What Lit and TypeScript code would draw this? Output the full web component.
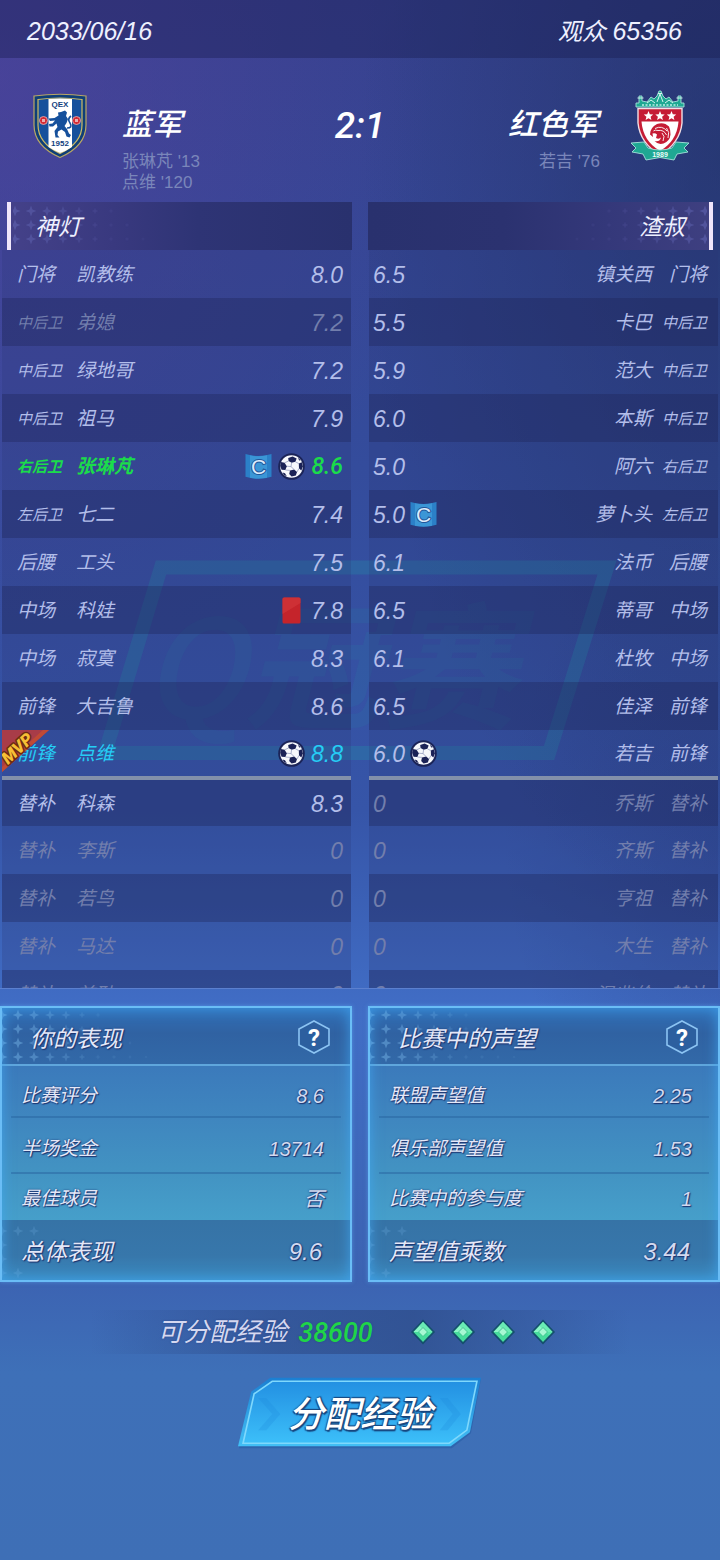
import { LitElement, html, svg, css, nothing } from "lit";
import { customElement, property } from "lit/decorators.js";
import { classMap } from "lit/directives/class-map.js";

type Mark = "captain" | "goal" | "red";
type Tone = "normal" | "self" | "best" | "off";

interface Player {
  pos: string;
  name: string;
  rating: string;
  marks?: Mark[];
  tone?: Tone;
  mvp?: boolean;
}

const home: Player[] = [
  { pos: "门将", name: "凯教练", rating: "8.0" },
  { pos: "中后卫", name: "弟媳", rating: "7.2", tone: "off" },
  { pos: "中后卫", name: "绿地哥", rating: "7.2" },
  { pos: "中后卫", name: "祖马", rating: "7.9" },
  { pos: "右后卫", name: "张琳芃", rating: "8.6", tone: "self", marks: ["captain", "goal"] },
  { pos: "左后卫", name: "七二", rating: "7.4" },
  { pos: "后腰", name: "工头", rating: "7.5" },
  { pos: "中场", name: "科娃", rating: "7.8", marks: ["red"] },
  { pos: "中场", name: "寂寞", rating: "8.3" },
  { pos: "前锋", name: "大吉鲁", rating: "8.6" },
  { pos: "前锋", name: "点维", rating: "8.8", tone: "best", marks: ["goal"], mvp: true },
  { pos: "替补", name: "科森", rating: "8.3" },
  { pos: "替补", name: "李斯", rating: "0", tone: "off" },
  { pos: "替补", name: "若鸟", rating: "0", tone: "off" },
  { pos: "替补", name: "马达", rating: "0", tone: "off" },
  { pos: "替补", name: "首耿", rating: "0", tone: "off" },
];

const away: Player[] = [
  { pos: "门将", name: "镇关西", rating: "6.5" },
  { pos: "中后卫", name: "卡巴", rating: "5.5" },
  { pos: "中后卫", name: "范大", rating: "5.9" },
  { pos: "中后卫", name: "本斯", rating: "6.0" },
  { pos: "右后卫", name: "阿六", rating: "5.0" },
  { pos: "左后卫", name: "萝卜头", rating: "5.0", marks: ["captain"] },
  { pos: "后腰", name: "法币", rating: "6.1" },
  { pos: "中场", name: "蒂哥", rating: "6.5" },
  { pos: "中场", name: "杜牧", rating: "6.1" },
  { pos: "前锋", name: "佳泽", rating: "6.5" },
  { pos: "前锋", name: "若吉", rating: "6.0", marks: ["goal"] },
  { pos: "替补", name: "乔斯", rating: "0", tone: "off" },
  { pos: "替补", name: "齐斯", rating: "0", tone: "off" },
  { pos: "替补", name: "亨祖", rating: "0", tone: "off" },
  { pos: "替补", name: "木生", rating: "0", tone: "off" },
  { pos: "替补", name: "温兆伦", rating: "0", tone: "off" },
];

const fontStack = css`"Liberation Sans", "Noto Sans CJK SC", sans-serif`;

const ballIcon = html`<svg class="mark" viewBox="0 0 27 27" role="img" aria-label="进球">
  <circle cx="13.5" cy="13.5" r="13.3" fill="#1b2458" />
  <circle cx="13.5" cy="13.5" r="11.3" fill="#f7f8fc" />
  <g fill="#1b2256">
    <path d="M10.2 5 14.6 3.400 18.6 5.400 17.4 8.8 13.6 9.8 10.6 8z" />
    <path d="M2.8 9 6.6 9.8 8.8 13.2 7.4 17 3.6 16.8 2.2 13z" />
    <path d="M12 17.400 16.200 16.600 19 19 17.8 22.4 13.6 23.6 11.2 21z" />
    <path d="M20.800 10.6 23.8 9.200 24.8 13.2 23.4 17.400 21 15.4z" />
    <path d="M4.6 19.4 7 20.2 8.8 23.2 6 22z" />
    <path d="M19.8 4.4 22.8 7.2 21.2 7.4z" />
  </g>
  <g stroke="#8a92b8" stroke-width=".7" fill="none">
    <path d="M13.600 9.800 13 13.600 16.200 16.600M13 13.600 8.800 13.200M17.400 8.800 20.800 10.600M7.400 17 12 17.400M19 19 21 15.400M10.600 8 6.600 9.800" />
  </g>
</svg>`;

const captainIcon = html`<svg class="mark" viewBox="0 0 27 27" role="img" aria-label="队长">
  <path d="M.5 1Q13.500 5 26.500 1V23.800Q13.500 27.600 .5 23.800Z" fill="#2b80c8" />
  <path d="M5 2.200Q13.500 4.400 22 2.200V24.800Q13.500 26.400 5 24.800Z" fill="#3b96d6" />
  <text x="13.500" y="21" text-anchor="middle" class="cap">C</text>
</svg>`;

const redIcon = html`<svg class="mark" viewBox="0 0 27 27" role="img" aria-label="红牌">
  <rect x="4.500" y=".5" width="18" height="26" rx="1.500" fill="#c5242b" />
  <path d="M4.500 17 22.500 6V2a1.500 1.500 0 0 0-1.500-1.500H6A1.500 1.500 0 0 0 4.500 2z" fill="#d2363a" opacity=".7" />
</svg>`;

const markIcons: Record<Mark, unknown> = { goal: ballIcon, captain: captainIcon, red: redIcon };

/* Four-pointed sparkles that shrink and fade along each line. */
const sparkles = (counts: number[], stepY: number, top: number) => {
  const shapes = [];
  for (let r = 0; r < counts.length; r++) {
    for (let c = 0; c < counts[r]; c++) {
      const s = c < 5 ? 5.6 - c * 0.2 : Math.max(1.6, 3.4 - (c - 5) * 0.4);
      const q = s * 0.27;
      const x = c * 16 + 2;
      const y = top + r * stepY;
      shapes.push(
        svg`<path opacity=${Math.max(0.14, 0.55 - c * 0.07)} d=${`M${x} ${y - s}L${x + q} ${y - q}L${x + s} ${y}L${x + q} ${y + q}L${x} ${y + s}L${x - q} ${y + q}L${x - s} ${y}L${x - q} ${y - q}Z`} />`
      );
    }
  }
  return html`<svg class="sparkles" width="170" height="60" viewBox="0 0 170 60" aria-hidden="true">${shapes}</svg>`;
};

@customElement("squad-table")
class SquadTable extends LitElement {
  @property({ attribute: false }) players: Player[] = [];
  @property({ type: Boolean }) mirrored = false;
  @property() coach = "";

  static styles = css`
    :host { display: block; min-width: 0; font-family: ${fontStack}; font-style: italic; }
    .coach {
      position: relative; display: flex; align-items: center; height: 48px; margin: 0 0 0 7px; box-sizing: border-box;
      padding: 1px 0 0 24px; border-left: 4px solid #f0e6fb; overflow: hidden;
      font-size: 23px; line-height: 28px; font-weight: 400; color: #eef0ff;
      background: linear-gradient(90deg, #444189 0, #39397f 30%, #2e3475 55%, #29316e 100%);
    }
    .coach.mirrored {
      margin: 0 7px 0 0; padding: 1px 24px 0 0; border-left: 0; border-right: 4px solid #f0e6fb; justify-content: flex-end;
      background: linear-gradient(270deg, #3e3f80 0, #34387a 30%, #2b3270 60%, #29316e 100%);
    }
    .sparkles { position: absolute; left: 2px; top: 0; fill: #6266b4; }
    .mirrored .sparkles { left: auto; right: 2px; transform: scaleX(-1); }
    .label { position: relative; }
    .view { height: 738px; overflow: hidden; margin: 0 1px 0 2px; background: rgba(40, 54, 115, .24); }
    .view.mirrored { margin: 0 2px 0 1px; }
    table { width: 100%; border-collapse: collapse; table-layout: fixed; }
    tr { height: 48px; color: #b3beea; position: relative; }
    tr:nth-child(even) { background: rgba(28, 34, 84, .34); }
    td { padding: 2px 0 0; height: 48px; line-height: 28px; box-sizing: border-box; vertical-align: middle; white-space: nowrap; font-size: 19px; }
    .cut td { border-bottom: 4px solid #8390aa; }
    .pos { width: 74px; padding-left: 15px; position: relative; }
    .pos.small { font-size: 15px; }
    .rating { padding: 0 8px 0 0; font-size: 23px; }
    .marks { display: flex; justify-content: flex-end; align-items: center; gap: 6px; height: 28px; }
    .value { padding-top: 1px; }
    .mirrored .marks { flex-direction: row-reverse; gap: 5px; }
    .mirrored .pos { width: 66px; padding: 2px 11px 0 0; text-align: right; }
    .mirrored .name { text-align: right; }
    .mirrored .rating { padding: 0 0 0 4px; }
    .mark { width: 27px; height: 27px; flex: none; }
    .cap { font: 400 21px "Liberation Sans", sans-serif; fill: #dcebfa; stroke: #22559a; stroke-width: 2; paint-order: stroke; }
    .off { color: #727eac; }
    .self { color: #1bdc4b; }
    .self td { font-weight: 700; }
    .self .value { font-family: "Roboto", sans-serif; font-weight: 500; }
    .best { color: #25cdf5; }
    .mvp { position: absolute; left: 0; top: 0; }
    .mvptext { font: italic 900 17px "Roboto", sans-serif; fill: #f6bf35; stroke: #6b2c12; stroke-width: 3; paint-order: stroke; stroke-linejoin: round; }
  `;

  private row(p: Player, i: number) {
    const pos = html`<td class=${classMap({ pos: true, small: p.pos.length > 2 })}>${p.pos}${p.mvp
      ? html`<svg class="mvp" width="48" height="44" viewBox="0 0 48 44" role="img" aria-label="MVP">
          <path d="M0 0H47L0 42Z" fill="#a83c48" />
          <path d="M0 37 41 0 47 0 0 42Z" fill="#c04a35" />
          <text class="mvptext" transform="translate(6 35) rotate(-43)">MVP</text>
        </svg>`
      : nothing}</td>`;
    const name = html`<td class="name">${p.name}</td>`;
    const rating = html`<td class="rating"><span class="marks">${(p.marks ?? []).map((m) => markIcons[m])}<span class="value">${p.rating}</span></span></td>`;
    return html`<tr class=${classMap({ [p.tone ?? "normal"]: true, cut: i === 10 })}>
      ${this.mirrored ? [rating, name, pos] : [pos, name, rating]}
    </tr>`;
  }

  render() {
    const side = { mirrored: this.mirrored };
    return html`
      <div class=${classMap({ coach: true, ...side })}>
        ${sparkles([7, 8, 9], 14, 9)}<span class="label">${this.coach}</span>
      </div>
      <div class=${classMap({ view: true, ...side })}>
        <table aria-label=${this.coach}><tbody>${this.players.map((p, i) => this.row(p, i))}</tbody></table>
      </div>`;
  }
}

@customElement("stat-panel")
class StatPanel extends LitElement {
  @property() heading = "";
  @property({ attribute: false }) rows: [string, string][] = [];
  @property({ attribute: false }) total: [string, string] = ["", ""];

  static styles = css`
    :host { display: block; min-width: 0; font-family: ${fontStack}; font-style: italic; }
    .panel {
      position: relative; border: 2px solid #6abdf6; color: #e4e8f8;
      text-shadow: 0 0 2px #1d3470, 1px 1px 1px #1d3470;
      background: linear-gradient(180deg, #3b7abb 58px, #3f86bf 110px, #4292c2 160px, #469fca 212px, #469fca 100%);
      box-shadow: 0 0 4px rgba(90, 170, 240, .6);
    }
    .panel::after { content: ""; position: absolute; inset: 0; pointer-events: none; box-shadow: inset 0 0 14px rgba(66, 170, 245, .75); }
    header {
      position: relative; display: flex; align-items: center; justify-content: space-between; height: 56px;
      padding: 0 20px 0 28px; border-bottom: 2px solid #5fa6dc; overflow: hidden;
      background: linear-gradient(180deg, #3070b8, #3062a2 45%, #3269a8);
    }
    h2 { position: relative; margin: 0; padding-top: 6px; font-size: 23px; line-height: 30px; font-weight: 400; }
    .sparkles { position: absolute; left: -2px; top: 0; fill: #76b3e6; }
    button { position: relative; z-index: 1; width: 32px; height: 34px; margin-top: 2px; padding: 0; border: 0; background: none; cursor: pointer; }
    button svg { display: block; }
    .q { font: 700 24px "Roboto", sans-serif; fill: #fff; }
    dl { margin: 0; }
    .rows { display: grid; grid-template-rows: 52px 56px 46px; }
    .row { display: flex; align-items: center; justify-content: space-between; padding: 8px 17px 0 10px; margin: 0 9px; border-bottom: 2px solid rgba(40, 100, 160, .5); }
    .row:first-child { padding-top: 10px; }
    .row:last-child { border-bottom: 0; padding-top: 4px; }
    dt, dd { margin: 0; font-size: 19px; line-height: 28px; }
    dd { font-size: 20px; color: #d3daf0; }
    .total {
      position: relative; display: flex; align-items: center; justify-content: space-between; height: 60px; padding: 4px 28px 0 19px; box-sizing: border-box;
      background: linear-gradient(180deg, #3673a6, #3777ab 60%, #3b8abf); overflow: hidden;
    }
    .total dt { font-size: 23px; }
    .total dd { font-size: 24px; }
    .total .sparkles { opacity: .5; }
  `;

  render() {
    return html`<section class="panel">
      <header>
        ${sparkles([7, 8, 9, 10], 14, 7)}
        <h2>${this.heading}</h2>
        <button aria-label="${this.heading}说明">
          <svg width="32" height="34" viewBox="0 0 32 34" aria-hidden="true">
            <path d="M16 1 31 9V25L16 33 1 25V9Z" fill="#2c5f9f" stroke="#8cc4f3" stroke-width="1.600" />
            <text class="q" x="16" y="26" text-anchor="middle">?</text>
          </svg>
        </button>
      </header>
      <dl>
        <div class="rows">
          ${this.rows.map(([k, v]) => html`<div class="row"><dt>${k}</dt><dd>${v}</dd></div>`)}
        </div>
        <div class="total">${sparkles([3, 1, 1, 2], 14, 11)}<dt>${this.total[0]}</dt><dd>${this.total[1]}</dd></div>
      </dl>
    </section>`;
  }
}

const homeCrest = html`<svg class="crest" viewBox="0 0 60 72" role="img" aria-label="蓝军队徽">
  <path d="M4 6Q30 2.500 56 6V35Q56 56 30 67.500 4 56 4 35Z" fill="#0e3f78" stroke="#b9a765" stroke-width="1.200" />
  <path d="M8 9.500Q30 6.500 52 9.500V35Q52 53 30 63.500 8 53 8 35Z" fill="#15509c" stroke="#d0bb63" stroke-width="1.200" />
  <path d="M18.500 9Q30 8 42 9V57Q36 61 30 63 24 60.500 18.500 57Z" fill="#fff" />
  <text class="crest-text" x="30" y="17" text-anchor="middle">QEX</text>
  <path d="M31 22 35 20.500 37 22.500 36 26 38 29 36.500 33 34.500 36 37 39 39 43.500 41 45 39.500 47.500 36.500 46.500 35 42 31.500 39.500 28 41.500 27.500 45 29.500 47.500 25.500 47.500 24.500 41 27.500 37 26.500 33.500 23 36.500 19.500 36.500 19 34 22.500 33.500 25 30.500 20 31 18.500 28.500 24.500 28 28.500 25.500 28 22.500Z" fill="#15509c" />
  <path d="M37 38Q43 38 40 33 37 29 41 26" fill="none" stroke="#15509c" stroke-width="1.600" />
  <circle cx="13.500" cy="30.500" r="4" fill="#d42b35" stroke="#e9b7b9" stroke-width=".8" />
  <circle cx="46.500" cy="30.500" r="4" fill="#d42b35" stroke="#e9b7b9" stroke-width=".8" />
  <path d="M12 29h3v3h-3zM45 29h3v3h-3z" fill="#f3e4e4" opacity=".7" />
  <text class="crest-text" x="30" y="56" text-anchor="middle">1952</text>
</svg>`;

const awayCrest = html`<svg class="crest" viewBox="0 0 60 72" role="img" aria-label="红色军队徽">
  <path d="M6 13H9V6l3 0 0 5 5 1 4-5 3 2 3-3 2-5 2 0 2 5 3 3 3-2 4 5 5-1 0-5 3 0V13h3v4H6Z" fill="#1fa893" stroke="#a5e3da" stroke-width=".9" />
  <path d="M12 15 48 15" stroke="#bdeee6" stroke-width="1.400" stroke-dasharray="2 1.500" />
  <path d="M27 12 30 4 33 12M17 13l4-3 4 3M35 13l4-3 4 3M7.500 8h6M46.500 8h6M28 3.500h4" fill="none" stroke="#d5f5f0" stroke-width="1" />
  <path d="M8 18.500H52V33Q50 53 30 65 10 53 8 33Z" fill="#c51c35" stroke="#f2dfe4" stroke-width="1.400" />
  <path d="M11.500 31.500H48.500Q47 51 30 61 13 51 11.500 31.500Z" fill="#fff" />
  <g fill="#fff">
    <path d="M18.500 21l1.300 3.200 3.400.3-2.600 2.200.8 3.300-2.900-1.800-2.900 1.800.8-3.300-2.600-2.200 3.400-.3z" />
    <path d="M30 21l1.300 3.200 3.400.3-2.600 2.200.8 3.300-2.900-1.800-2.900 1.800.8-3.300-2.600-2.200 3.400-.3z" />
    <path d="M41.500 21l1.300 3.200 3.400.3-2.600 2.200.8 3.300-2.900-1.800-2.900 1.800.8-3.300-2.600-2.200 3.400-.3z" />
  </g>
  <path d="M39 36.500Q34 31.500 27 34 20 37.500 20 44.500L23 47 22.500 43.500Q25 42.500 27 44.500L26 48Q29 49.500 31 47.500 29.500 52.500 24.500 51 28 55 33.500 53.500 40 51 40.500 44.500 40.500 39.500 39 36.500Z" fill="#c51c35" />
  <path d="M25 38.500Q32 35 37 41M28 40.500Q34 39.500 36.500 45M32 43Q35.500 46 33 51M36.500 38Q40 42 38 48M23.500 41Q25 39.500 28 40.500" fill="none" stroke="#fff" stroke-width=".9" />
  <path d="M1 53 14 52 18 58Q30 62 42 58L46 52 59 53 54 58 58 62 47 64 44 70 30 67.500 16 70 13 64 2 62 6 58Z" fill="#1fa893" stroke="#a5e3da" stroke-width=".9" />
  <text class="crest-year" x="30" y="66.500" text-anchor="middle">1989</text>
</svg>`;

const gem = html`<svg width="24" height="26" viewBox="0 0 24 26" aria-hidden="true">
  <path d="M12 .5 24 13 12 25.500 0 13Z" fill="#14506c" />
  <path d="M12 3 21.500 13 12 23 2.500 13Z" fill="#46dc9c" />
  <path d="M12 3 21.500 13H16L12 9 8 13H2.500Z" fill="#8af5c6" />
  <path d="M12 3 21.500 13 18 16.500 8.500 6.700Z" fill="#5de8ad" opacity=".7" />
  <path d="M12 8.500 16.500 13 12 17.500 7.500 13Z" fill="#a7f8d3" stroke="#35bd86" stroke-width=".8" />
</svg>`;

@customElement("app-root")
class AppRoot extends LitElement {
  static styles = css`
    :host {
      display: block; min-height: 100vh; box-sizing: border-box; overflow: hidden;
      font-family: ${fontStack}; font-style: italic; color: #eef0ff;
      background:
        radial-gradient(ellipse 60% 40% at 0 5%, rgba(86, 66, 160, .55), rgba(86, 66, 160, 0)),
        radial-gradient(ellipse 50% 50% at 100% 10%, rgba(28, 46, 92, .55), rgba(28, 46, 92, 0)),
        radial-gradient(ellipse 30% 20% at 100% 54%, rgba(40, 60, 130, .4), rgba(40, 60, 130, 0)),
        linear-gradient(180deg, #36418e 0, #344c9c 30%, #3655a8 52%, #416ec6 65%, #3c63b2 82%, #3e70b8 88%, #3e6fb6 100%);
    }
    .top { display: flex; justify-content: space-between; align-items: center; height: 58px; padding: 4px 38px 0 27px; box-sizing: border-box; font-size: 24px; line-height: 32px; background: rgba(26, 32, 84, .42); }
    .top time, .top .num { font-size: 25px; }
    .match { display: grid; grid-template-columns: 1fr auto 1fr; align-items: start; padding: 32px 30px 9px; }
    .side { display: flex; gap: 32px; }
    .side.away { flex-direction: row-reverse; text-align: right; gap: 30px; }
    .side.away h1 { padding-right: 2px; }
    .crest { width: 60px; height: 72px; flex: none; }
    .crest-text { font: 700 8px "Liberation Sans", sans-serif; fill: #123f80; }
    .crest-year { font: 700 7px "Liberation Sans", sans-serif; fill: #eafbf8; }
    .club { padding-top: 15px; }
    h1 { margin: 0; font-size: 30px; line-height: 40px; font-weight: 500; color: #fff; }
    .goals { margin: 6px 0 0; padding: 0; list-style: none; font-size: 17px; line-height: 21px; font-style: normal; color: #7a86ba; }
    .result { margin-top: 15px; font-family: "Roboto", sans-serif; font-size: 37px; line-height: 42px; font-weight: 500; color: #fff; }
    .squads { position: relative; display: grid; grid-template-columns: 1fr 1fr; gap: 16px; border-bottom: 1px solid rgba(120, 150, 220, .5); }
    .squads squad-table { position: relative; }
    .watermark { position: absolute; left: 50%; top: 358px; margin-left: -260px; }
    .wm-text { font: italic 700 136px "Noto Sans CJK SC", sans-serif; }
    .wm-q { font-weight: 500; }
    .panels { display: grid; grid-template-columns: 1fr 1fr; gap: 16px; margin-top: 17px; }
    .xp {
      display: flex; align-items: center; justify-content: center; height: 44px; margin: 28px 90px 0; padding-right: 8px; box-sizing: border-box; font-size: 26px; line-height: 32px; color: #d5d8f0;
      text-shadow: 0 0 2px #2a4588;
      background: linear-gradient(90deg, rgba(46, 76, 138, 0), rgba(46, 76, 138, .6) 35%, rgba(46, 76, 138, .75) 60%, rgba(46, 76, 138, 0));
    }
    .xp strong { margin: 0 38px 0 11px; padding-top: 2px; font-family: "Roboto", sans-serif; font-size: 27px; font-weight: 500; color: #1fd548; }
    .gems { display: flex; gap: 16px; }
    .actions { display: flex; justify-content: center; padding: 23px 0 78px; }
    .assign { display: grid; place-items: center; padding: 0; border: 0; background: none; font: inherit; font-size: 36px; line-height: 48px; font-weight: 500; color: #fff; cursor: pointer; }
    .assign > * { grid-area: 1 / 1; }
    .caption { padding-top: 3px; text-shadow: 0 0 2px #17467f, 1px 2px 1px #17467f, -1px 1px 1px #17467f, 1px -1px 1px #17467f; }
  `;

  render() {
    return html`
      <header class="top">
        <time datetime="2033-06-16">2033/06/16</time>
        <span>观众 <span class="num">65356</span></span>
      </header>
      <section class="match">
        <div class="side">
          ${homeCrest}
          <div class="club"><h1>蓝军</h1><ul class="goals"><li>张琳芃 '13</li><li>点维 '120</li></ul></div>
        </div>
        <div class="result">2:1</div>
        <div class="side away">
          ${awayCrest}
          <div class="club"><h1>红色军</h1><ul class="goals"><li>若吉 '76</li></ul></div>
        </div>
      </section>
      <section class="squads">
        <svg class="watermark" width="520" height="204" viewBox="0 0 520 204" aria-hidden="true">
          <path d="M61 7.500H507L449 193H5Z" fill="none" stroke="#2390a8" stroke-opacity=".32" stroke-width="14" />
          <text class="wm-text" x="42" y="158" fill="#2390a8" fill-opacity=".12"><tspan class="wm-q">Q</tspan>冠赛</text>
        </svg>
        <squad-table .players=${home} coach="神灯"></squad-table>
        <squad-table .players=${away} coach="渣叔" mirrored></squad-table>
      </section>
      <section class="panels">
        <stat-panel heading="你的表现"
          .rows=${[["比赛评分", "8.6"], ["半场奖金", "13714"], ["最佳球员", "否"]]}
          .total=${["总体表现", "9.6"]}></stat-panel>
        <stat-panel heading="比赛中的声望"
          .rows=${[["联盟声望值", "2.25"], ["俱乐部声望值", "1.53"], ["比赛中的参与度", "1"]]}
          .total=${["声望值乘数", "3.44"]}></stat-panel>
      </section>
      <div class="xp"><span>可分配经验</span><strong>38600</strong><span class="gems">${[0, 1, 2, 3].map(() => gem)}</span></div>
      <div class="actions">
        <button class="assign">
          <svg width="244" height="72" viewBox="0 0 242 70" aria-hidden="true">
            <defs>
              <linearGradient id="fill" x1="0" y1="0" x2="0" y2="1">
                <stop offset="0" stop-color="#2390e2" /><stop offset="1" stop-color="#3cbff9" />
              </linearGradient>
              <linearGradient id="edge" x1="0" y1="0" x2="0" y2="1">
                <stop offset="0" stop-color="#1b7fd2" /><stop offset="1" stop-color="#42c0f6" />
              </linearGradient>
            </defs>
            <path d="M32 1H241L231 55 212 70H1L13 15Z" fill="#2a60a8" opacity=".7" />
            <path d="M32 0H241L230 54 211 68H0L13 14Z" fill="url(#edge)" />
            <path d="M34 3.500H237L227 52 209.500 65H5L16 16Z" fill="url(#fill)" stroke="#7fd8fc" stroke-width="1.600" />
            <path d="M20 20 34 36 20 52H28L42 36 28 20ZM200 20 213 36 200 52H208L221 36 208 20Z" fill="#1c86dc" opacity=".25" />
          </svg>
          <span class="caption">分配经验</span>
        </button>
      </div>`;
  }
}
